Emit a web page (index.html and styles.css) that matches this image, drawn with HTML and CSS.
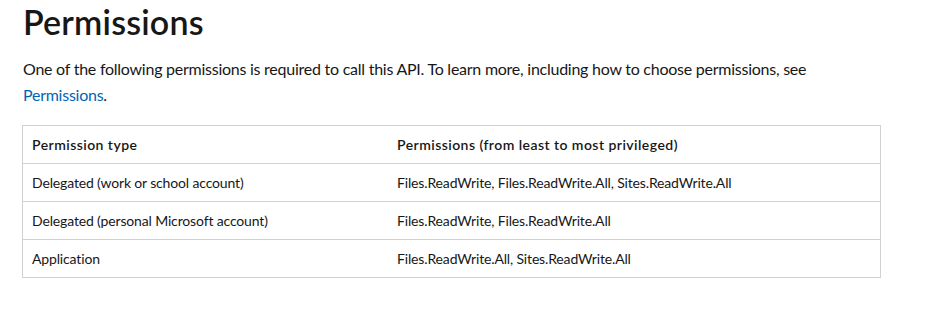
FILE: index.html
```html
<!DOCTYPE html>
<html lang="en">
<head>
    <meta charset="UTF-8">
    <title>Permissions</title>
    <link rel="stylesheet" href="styles.css">
</head>
<body>
    <div class="content">
        <h1>Permissions</h1>
        <p>One of the following permissions is required to call this API. To learn more, including how to choose permissions, see <a href="#">Permissions</a>.</p>
        <table>
            <thead>
                <tr>
                    <th class="col-type">Permission type</th>
                    <th>Permissions (from least to most privileged)</th>
                </tr>
            </thead>
            <tbody>
                <tr>
                    <td>Delegated (work or school account)</td>
                    <td>Files.ReadWrite, Files.ReadWrite.All, Sites.ReadWrite.All</td>
                </tr>
                <tr>
                    <td>Delegated (personal Microsoft account)</td>
                    <td>Files.ReadWrite, Files.ReadWrite.All</td>
                </tr>
                <tr>
                    <td>Application</td>
                    <td>Files.ReadWrite.All, Sites.ReadWrite.All</td>
                </tr>
            </tbody>
        </table>
    </div>
</body>
</html>
```

FILE: styles.css
```css
body {
    margin: 0;
    font-family: "Segoe UI", Lato, sans-serif;
    color: #171717;
    background: #ffffff;
}
.content {
    padding: 0 51px 0 22px;
}
h1 {
    font-size: 34px;
    font-weight: 600;
    line-height: 1.3;
    letter-spacing: 0.2px;
    margin: 0 0 12px 1px;
}
p {
    font-size: 16px;
    line-height: 26px;
    letter-spacing: -0.25px;
    margin: 0 0 17px 1px;
}
a {
    color: #0065b3;
    text-decoration: none;
}
table {
    width: 100%;
    border-collapse: collapse;
    font-size: 14px;
    border: 1px solid #d1d1d1;
}
th, td {
    border-top: 1px solid #d1d1d1;
    border-bottom: 1px solid #d1d1d1;
    padding: 9px 9px;
    height: 19px;
    text-align: left;
}
td {
    letter-spacing: -0.15px;
}
th {
    font-weight: 600;
    letter-spacing: 0.45px;
}
.col-type {
    width: 347px;
}
```
